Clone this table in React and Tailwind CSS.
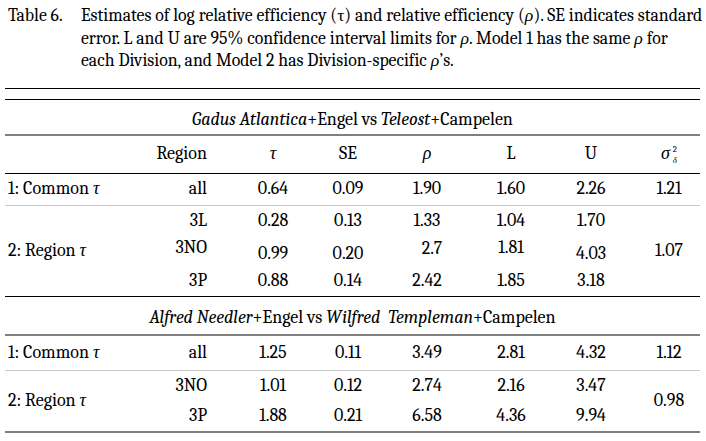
import React from "react";

const cols = "grid grid-cols-[145px_76px_94px_56px_102px_66px_94px_62px]";

function Sigma() {
  return (
    <span className="inline-flex items-center">
      <span className="italic pr-[1px]">σ</span>
      <span className="flex flex-col gap-[1px] text-[9px] leading-[10px] ml-[2px] italic">
        <span className="not-italic">2</span>
        <span>δ</span>
      </span>
    </span>
  );
}

function Row({ label, region, values, sigma, h = "h-[31px]" }) {
  return (
    <div className={`${cols} ${h} items-center`}>
      <div className="pl-[3px]">{label}</div>
      <div className="text-right pr-[19px]">{region}</div>
      {values.map((v, i) => (
        <div key={i} className="text-center">
          {v}
        </div>
      ))}
      <div className="text-center">{sigma}</div>
    </div>
  );
}

function Block({ label, rows, sigma, rowH }) {
  return (
    <div className={`${cols} items-center`}>
      <div className="pl-[3px]">{label}</div>
      <div className="col-span-6 flex flex-col">
        {rows.map((r, i) => (
          <div
            key={i}
            className={`grid grid-cols-[76px_94px_56px_102px_66px_94px] items-center ${rowH}`}
          >
            <div className="text-right pr-[19px]">{r[0]}</div>
            {r.slice(1).map((v, j) => (
              <div key={j} className="text-center">
                {v}
              </div>
            ))}
          </div>
        ))}
      </div>
      <div className="text-center">{sigma}</div>
    </div>
  );
}

const up = (t) => <span className="inline-block -translate-y-[3px]">{t}</span>;
const down = (t) => <span className="inline-block translate-y-[3px]">{t}</span>;

export default function App() {
  return (
    <div className="w-[706px] h-[441px] bg-white text-black font-serif text-[18px] overflow-hidden">
      <div className="flex pt-[4px] leading-[22.5px] text-[17.75px]">
        <div className="w-[81px] pl-[8px] shrink-0">Table 6.</div>
        <div className="whitespace-nowrap">
          <div>
            Estimates of log relative efficiency (τ) and relative efficiency (<i>ρ</i>). SE indicates standard
          </div>
          <div>
            error. L and U are 95% confidence interval limits for <i>ρ</i>. Model 1 has the same <i>ρ</i> for
          </div>
          <div>
            each Division, and Model 2 has Division-specific <i>ρ</i>’s.
          </div>
        </div>
      </div>

      <div className="mx-[5px] w-[695px] mt-[16px] leading-none">
        <div className="border-t border-black" />
        <div className="h-[10px]" />
        <div className="border-t border-black" />

        <div className="h-[34px] flex items-center justify-center pt-[7px]">
          <span>
            <i>Gadus Atlantica</i>+Engel vs <i>Teleost</i>+Campelen
          </span>
        </div>
        <div className="border-t-2 border-[#808080]" />

        <Row
          h="h-[37px]"
          label=""
          region="Region"
          values={[<i>τ</i>, "SE", <i>ρ</i>, "L", "U"]}
          sigma={<Sigma />}
        />
        <div className="border-t-[1.5px] border-black" />
        <Row
          label={<span>1: Common <i>τ</i></span>}
          region="all"
          values={["0.64", "0.09", "1.90", "1.60", "2.26"]}
          sigma="1.21"
        />
        <div className="border-t border-[#c8c8c8]" />
        <Block
          label={<span>2: Region <i>τ</i></span>}
          rowH="h-[30px]"
          rows={[
            ["3L", "0.28", "0.13", "1.33", "1.04", "1.70"],
            [
              up("3NO"),
              down("0.99"),
              down("0.20"),
              <span className="inline-block pl-[10px] -translate-y-[2px]">2.7</span>,
              up("1.81"),
              down("4.03"),
            ],
            ["3P", "0.88", "0.14", "2.42", "1.85", "3.18"],
          ]}
          sigma="1.07"
        />
        <div className="border-t-[1.5px] border-black" />

        <div className="h-[37px] flex items-center justify-center pt-[6px]">
          <span>
            <i>Alfred Needler</i>+Engel vs <i>Wilfred&nbsp; Templeman</i>+Campelen
          </span>
        </div>
        <div className="border-t-2 border-[#808080]" />
        <Row
          h="h-[34px]"
          label={<span>1: Common <i>τ</i></span>}
          region="all"
          values={["1.25", "0.11", "3.49", "2.81", "4.32"]}
          sigma="1.12"
        />
        <div className="border-t border-[#c8c8c8]" />
        <Block
          label={<span>2: Region <i>τ</i></span>}
          rowH="h-[30px]"
          rows={[
            ["3NO", "1.01", "0.12", "2.74", "2.16", "3.47"],
            ["3P", "1.88", "0.21", "6.58", "4.36", "9.94"],
          ]}
          sigma="0.98"
        />
        <div className="border-t-2 border-[#808080]" />
      </div>
    </div>
  );
}
